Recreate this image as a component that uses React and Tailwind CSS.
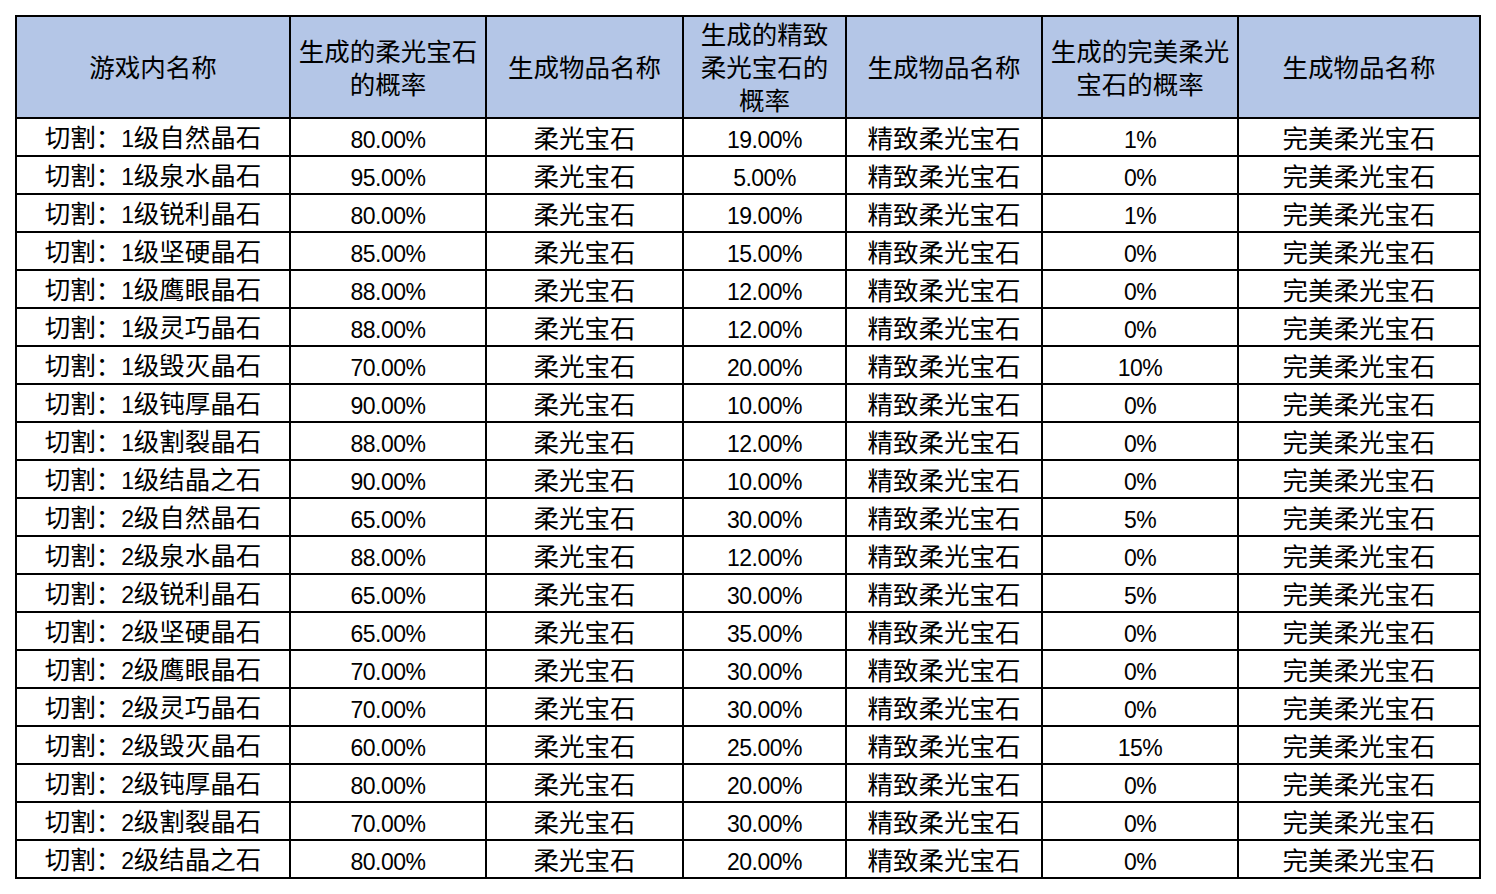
import React from "react";

const rows = [
  ["1", "自然晶石", "80.00%", "19.00%", "1%"],
  ["1", "泉水晶石", "95.00%", "5.00%", "0%"],
  ["1", "锐利晶石", "80.00%", "19.00%", "1%"],
  ["1", "坚硬晶石", "85.00%", "15.00%", "0%"],
  ["1", "鹰眼晶石", "88.00%", "12.00%", "0%"],
  ["1", "灵巧晶石", "88.00%", "12.00%", "0%"],
  ["1", "毁灭晶石", "70.00%", "20.00%", "10%"],
  ["1", "钝厚晶石", "90.00%", "10.00%", "0%"],
  ["1", "割裂晶石", "88.00%", "12.00%", "0%"],
  ["1", "结晶之石", "90.00%", "10.00%", "0%"],
  ["2", "自然晶石", "65.00%", "30.00%", "5%"],
  ["2", "泉水晶石", "88.00%", "12.00%", "0%"],
  ["2", "锐利晶石", "65.00%", "30.00%", "5%"],
  ["2", "坚硬晶石", "65.00%", "35.00%", "0%"],
  ["2", "鹰眼晶石", "70.00%", "30.00%", "0%"],
  ["2", "灵巧晶石", "70.00%", "30.00%", "0%"],
  ["2", "毁灭晶石", "60.00%", "25.00%", "15%"],
  ["2", "钝厚晶石", "80.00%", "20.00%", "0%"],
  ["2", "割裂晶石", "70.00%", "30.00%", "0%"],
  ["2", "结晶之石", "80.00%", "20.00%", "0%"],
];

const cjk = "font-['Noto_Sans_CJK_SC',sans-serif] text-[25.5px]";
const num = "font-['Liberation_Sans',Arial,sans-serif] text-[23px] tracking-[-0.5px]";

function H({ children }) {
  return (
    <div className={`bg-[#b4c6e7] flex items-center justify-center text-center leading-[33px] pb-[3px] text-black ${cjk}`}>
      <div>{children}</div>
    </div>
  );
}

function CJ({ children }) {
  return (
    <div className="bg-white flex items-center justify-center whitespace-nowrap text-black">
      <span className={`${cjk} leading-none`}>{children}</span>
    </div>
  );
}

function N({ children }) {
  return (
    <div className="bg-white flex items-center justify-center whitespace-nowrap pt-[6px] text-black">
      <span className={`${num} leading-none`}>{children}</span>
    </div>
  );
}

export default function App() {
  return (
    <div className="bg-white w-[1496px] h-[894px] pt-[15px] pl-[15px]">
      <div className="grid w-[1466px] bg-black p-[2px] gap-[2px] grid-cols-[272px_194px_195px_161px_194px_194px_240px] grid-rows-[100px_repeat(20,36px)]">
        <H>游戏内名称</H>
        <H>
          生成的柔光宝石
          <br />
          的概率
        </H>
        <H>生成物品名称</H>
        <H>
          生成的精致
          <br />
          柔光宝石的
          <br />
          概率
        </H>
        <H>生成物品名称</H>
        <H>
          生成的完美柔光
          <br />
          宝石的概率
        </H>
        <H>生成物品名称</H>
        {rows.map((r, i) => (
          <React.Fragment key={i}>
            <CJ>
              切割：<span className={num}>{r[0]}</span>级{r[1]}
            </CJ>
            <N>{r[2]}</N>
            <CJ>柔光宝石</CJ>
            <N>{r[3]}</N>
            <CJ>精致柔光宝石</CJ>
            <N>{r[4]}</N>
            <CJ>完美柔光宝石</CJ>
          </React.Fragment>
        ))}
      </div>
    </div>
  );
}
